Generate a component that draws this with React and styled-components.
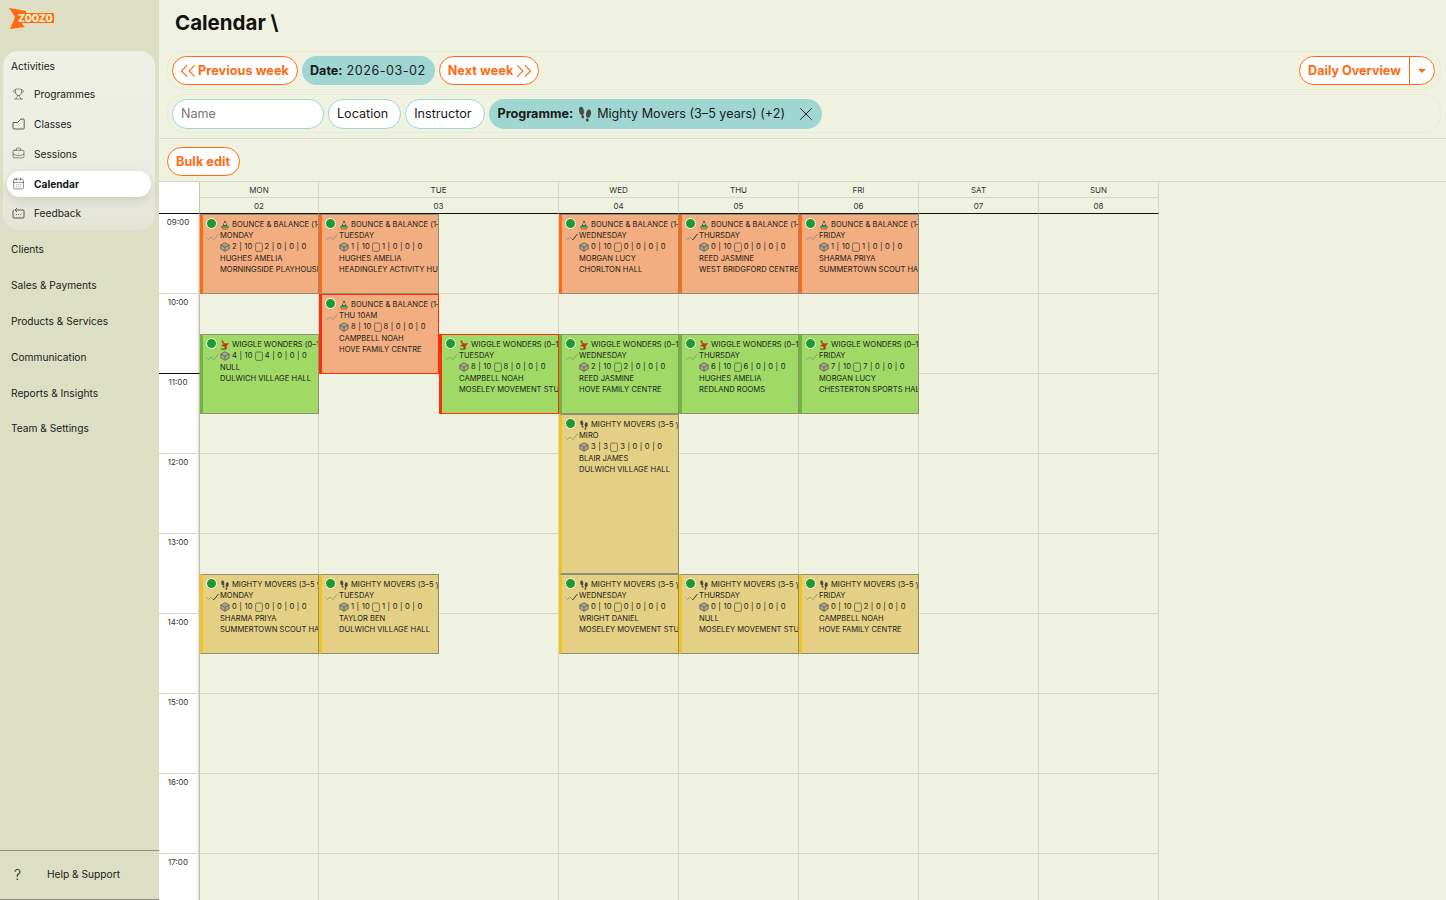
import styled, { createGlobalStyle } from "styled-components";
import { Trophy, BriefcaseBusiness, CalendarDays, ChevronsLeft, ChevronsRight, X } from "lucide-react";

const FONT = `Inter, "Noto Sans", "Liberation Sans", sans-serif`;
const ORANGE = "#ff6a13";
const TEAL = "#9fd6d2";

const GlobalStyle = createGlobalStyle`
  html, body {
    margin: 0;
    height: 100%;
    overflow: hidden;
    background: #f0f2e1;
    font-family: ${FONT};
    color: #1a1a1a;
  }
  * { box-sizing: border-box; }
`;

const days = [
  { name: "MON", num: "02", col: 2, span: 1 },
  { name: "TUE", num: "03", col: 3, span: 2 },
  { name: "WED", num: "04", col: 5, span: 1 },
  { name: "THU", num: "05", col: 6, span: 1 },
  { name: "FRI", num: "06", col: 7, span: 1 },
  { name: "SAT", num: "07", col: 8, span: 1 },
  { name: "SUN", num: "08", col: 9, span: 1 },
];

const hours = ["09:00", "10:00", "11:00", "12:00", "13:00", "14:00", "15:00", "16:00", "17:00"];

const kinds = {
  bounce: { bg: "#f2ae81", bar: "#ff6a13", title: "BOUNCE & BALANCE (1–3 years)" },
  wiggle: { bg: "#a0d966", bar: "#6eb43f", title: "WIGGLE WONDERS (0–1 years)" },
  mighty: { bg: "#e4d084", bar: "#f5c21b", title: "MIGHTY MOVERS (3–5 years)" },
};

// start is half hours after 09:00, size in half hours
const events = [
  { kind: "bounce", col: 2, start: 0, size: 2, day: "MONDAY", a: "2 | 10", b: "2 | 0 | 0 | 0", who: "HUGHES AMELIA", where: "MORNINGSIDE PLAYHOUSE" },
  { kind: "bounce", col: 3, start: 0, size: 2, day: "TUESDAY", a: "1 | 10", b: "1 | 0 | 0 | 0", who: "HUGHES AMELIA", where: "HEADINGLEY ACTIVITY HUB" },
  { kind: "bounce", col: 5, start: 0, size: 2, day: "WEDNESDAY", a: "0 | 10", b: "0 | 0 | 0 | 0", who: "MORGAN LUCY", where: "CHORLTON HALL", done: true },
  { kind: "bounce", col: 6, start: 0, size: 2, day: "THURSDAY", a: "0 | 10", b: "0 | 0 | 0 | 0", who: "REED JASMINE", where: "WEST BRIDGFORD CENTRE", done: true },
  { kind: "bounce", col: 7, start: 0, size: 2, day: "FRIDAY", a: "1 | 10", b: "1 | 0 | 0 | 0", who: "SHARMA PRIYA", where: "SUMMERTOWN SCOUT HALL" },
  { kind: "bounce", col: 3, start: 2, size: 2, day: "THU 10AM", a: "8 | 10", b: "8 | 0 | 0 | 0", who: "CAMPBELL NOAH", where: "HOVE FAMILY CENTRE", alert: true },
  { kind: "wiggle", col: 2, start: 3, size: 2, a: "4 | 10", b: "4 | 0 | 0 | 0", who: "NULL", where: "DULWICH VILLAGE HALL" },
  { kind: "wiggle", col: 4, start: 3, size: 2, day: "TUESDAY", a: "8 | 10", b: "8 | 0 | 0 | 0", who: "CAMPBELL NOAH", where: "MOSELEY MOVEMENT STUDIO", alert: true },
  { kind: "wiggle", col: 5, start: 3, size: 2, day: "WEDNESDAY", a: "2 | 10", b: "2 | 0 | 0 | 0", who: "REED JASMINE", where: "HOVE FAMILY CENTRE" },
  { kind: "wiggle", col: 6, start: 3, size: 2, day: "THURSDAY", a: "6 | 10", b: "6 | 0 | 0 | 0", who: "HUGHES AMELIA", where: "REDLAND ROOMS" },
  { kind: "wiggle", col: 7, start: 3, size: 2, day: "FRIDAY", a: "7 | 10", b: "7 | 0 | 0 | 0", who: "MORGAN LUCY", where: "CHESTERTON SPORTS HALL" },
  { kind: "mighty", col: 5, start: 5, size: 4, day: "MIRO", a: "3 | 3", b: "3 | 0 | 0 | 0", who: "BLAIR JAMES", where: "DULWICH VILLAGE HALL" },
  { kind: "mighty", col: 2, start: 9, size: 2, day: "MONDAY", a: "0 | 10", b: "0 | 0 | 0 | 0", who: "SHARMA PRIYA", where: "SUMMERTOWN SCOUT HALL", done: true },
  { kind: "mighty", col: 3, start: 9, size: 2, day: "TUESDAY", a: "1 | 10", b: "1 | 0 | 0 | 0", who: "TAYLOR BEN", where: "DULWICH VILLAGE HALL" },
  { kind: "mighty", col: 5, start: 9, size: 2, day: "WEDNESDAY", a: "0 | 10", b: "0 | 0 | 0 | 0", who: "WRIGHT DANIEL", where: "MOSELEY MOVEMENT STUDIO", done: true },
  { kind: "mighty", col: 6, start: 9, size: 2, day: "THURSDAY", a: "0 | 10", b: "0 | 0 | 0 | 0", who: "NULL", where: "MOSELEY MOVEMENT STUDIO", done: true },
  { kind: "mighty", col: 7, start: 9, size: 2, day: "FRIDAY", a: "0 | 10", b: "2 | 0 | 0 | 0", who: "CAMPBELL NOAH", where: "HOVE FAMILY CENTRE" },
];

const Logo = () => (
  <svg width="46" height="21" viewBox="0 0 46 21">
    <polygon points="0,0 17,3 17,5 45,5 45,15 13,15 13,16 16,19 1,21 6,9" fill="#ff6a13" />
    <text x="9" y="14" fontFamily={FONT} fontSize="10.5" fontWeight="800" letterSpacing="-0.3" fill="#f6f2d0">
      Z00Z0
    </text>
  </svg>
);

const ClassesIcon = () => (
  <svg width="13" height="12" viewBox="0 0 13 12" fill="none" stroke="#333" strokeWidth="0.8">
    <path d="M1 4.5h4.5L9 1h2.2a1 1 0 0 1 1 1v8a1 1 0 0 1-1 1H2a1 1 0 0 1-1-1z" />
  </svg>
);

const FeedbackIcon = () => (
  <svg width="13" height="12" viewBox="0 0 13 12" fill="none" stroke="#333" strokeWidth="0.8">
    <path d="M4 3H11a1 1 0 0 1 1 1v6a1 1 0 0 1-1 1H2a1 1 0 0 1-1-1V4a1 1 0 0 1 1-1" />
    <path d="M5 1L3 3l2 2" />
    <path d="M4 7.5h.8M6.2 7.5h.8M8.4 7.5h.8" />
  </svg>
);

const BounceIcon = () => (
  <svg width="10" height="10" viewBox="0 0 10 10">
    <path d="M5 0L7.5 6H2.5z" fill="#4d4a3f" />
    <circle cx="5" cy="4" r="1.3" fill="#e7c06d" />
    <rect x="1" y="6" width="8" height="2" fill="#4f9a6c" />
    <rect x="2" y="8" width="6" height="2" fill="#d9863a" />
  </svg>
);

const WiggleIcon = () => (
  <svg width="10" height="10" viewBox="0 0 10 10">
    <path d="M2 1.5L5 3.5L9 3L6.5 6.5L7 9H5L4 6.5L1 6L3 4.5z" fill="#c8321f" />
    <circle cx="2.5" cy="1.5" r="1" fill="#7a4a20" />
    <rect x="1" y="8.5" width="5" height="1.2" fill="#4d6a2a" />
  </svg>
);

const FeetIcon = ({ size = 10 }) => (
  <svg width={size} height={size} viewBox="0 0 10 10" fill="#4a4a44">
    <ellipse cx="2.8" cy="3" rx="1.5" ry="2.6" transform="rotate(-10 2.8 3)" />
    <ellipse cx="3.6" cy="6.7" rx="0.9" ry="1.1" />
    <ellipse cx="7.2" cy="4.8" rx="1.5" ry="2.6" transform="rotate(10 7.2 4.8)" />
    <ellipse cx="6.4" cy="8.7" rx="0.9" ry="1.1" />
  </svg>
);

const kindIcons = { bounce: BounceIcon, wiggle: WiggleIcon, mighty: FeetIcon };

const CubeIcon = () => (
  <svg width="10" height="10" viewBox="0 0 10 10" fill="#a8a48f" stroke="#45453d" strokeWidth="0.6">
    <path d="M5 .7L9.2 3v4L5 9.3.8 7V3z" />
    <path d="M.8 3L5 5.3 9.2 3M5 5.3v4" fill="none" />
  </svg>
);

const SlotIcon = () => (
  <svg width="8" height="10" viewBox="0 0 8 10" fill="none" stroke="#3d3d38" strokeWidth="0.6">
    <rect x=".6" y="1" width="6.8" height="8.4" rx="1.2" />
  </svg>
);

// grey wave of ticks, the last one goes black when the register is done
const DoubleTick = ({ done }) => (
  <svg width="13" height="8" viewBox="0 0 13 8" fill="none" strokeWidth="0.8">
    <path d="M.5 4.5L2.5 6.5 5 4l2 2" stroke="#8d8d80" />
    <path d="M7 6l.8.8L12.5 1" stroke={done ? "#111" : "#8d8d80"} />
  </svg>
);

const Sidebar = () => (
  <Side>
    <LogoWrap>
      <Logo />
    </LogoWrap>
    <Group>
      <GroupTitle>Activities</GroupTitle>
      <SubItem>
        <Trophy size={12} strokeWidth={1} />
        Programmes
      </SubItem>
      <SubItem>
        <ClassesIcon />
        Classes
      </SubItem>
      <SubItem>
        <BriefcaseBusiness size={13} strokeWidth={1} />
        Sessions
      </SubItem>
      <SubItem $active>
        <CalendarDays size={13} strokeWidth={1} />
        Calendar
      </SubItem>
      <SubItem>
        <FeedbackIcon />
        Feedback
      </SubItem>
    </Group>
    <TopItem>Clients</TopItem>
    <TopItem>Sales &amp; Payments</TopItem>
    <TopItem>Products &amp; Services</TopItem>
    <TopItem>Communication</TopItem>
    <TopItem>Reports &amp; Insights</TopItem>
    <TopItem>Team &amp; Settings</TopItem>
    <Help>
      <HelpMark>?</HelpMark>
      Help &amp; Support
    </Help>
  </Side>
);

const Toolbar = () => (
  <>
    <Panel>
      <PrevButton>
        <ChevronsLeft size={26} strokeWidth={1} />
        Previous week
      </PrevButton>
      <FilledChip>
        <b>Date:</b> <DateValue>2026-03-02</DateValue>
      </FilledChip>
      <NextButton>
        Next week
        <ChevronsRight size={26} strokeWidth={1} />
      </NextButton>
      <SplitButton>
        <SplitLabel>Daily Overview</SplitLabel>
        <SplitCaret>
          <Caret />
        </SplitCaret>
      </SplitButton>
    </Panel>
    <Panel>
      <NameInput placeholder="Name" />
      <FilterChip>Location</FilterChip>
      <FilterChip>Instructor</FilterChip>
      <ProgrammeChip>
        <b>Programme:</b>
        <FeetIcon size={16} />
        Mighty Movers (3–5 years) (+2)
        <CloseIcon>
          <X size={22} strokeWidth={1} />
        </CloseIcon>
      </ProgrammeChip>
    </Panel>
  </>
);

const EventCard = ({ ev }) => {
  const kind = kinds[ev.kind];
  const Icon = kindIcons[ev.kind];
  return (
    <Event $col={ev.col} $start={ev.start} $size={ev.size} $bg={kind.bg} $bar={kind.bar} $alert={ev.alert}>
      <EventSide>
        <Dot />
        <Ticks>
          <DoubleTick done={ev.done} />
        </Ticks>
      </EventSide>
      <EventBody>
        <EventLine>
          <Icon />
          <TitleText>{kind.title}</TitleText>
        </EventLine>
        {ev.day && <EventLine>{ev.day}</EventLine>}
        <EventLine>
          <CubeIcon />
          <StatText>{ev.a}</StatText>
          <SlotIcon />
          <StatText>{ev.b}</StatText>
        </EventLine>
        <PersonLine>{ev.who}</PersonLine>
        <EventLine>{ev.where}</EventLine>
      </EventBody>
    </Event>
  );
};

const Calendar = () => (
  <CalendarGrid>
    <CornerCell $row={1} />
    <CornerCell $row={2} $last />
    {days.map((d) => (
      <HeadCell key={d.name} $row={1} $col={d.col} $span={d.span}>
        {d.name}
      </HeadCell>
    ))}
    {days.map((d) => (
      <HeadCell key={d.num} $row={2} $col={d.col} $span={d.span} $last>
        {d.num}
      </HeadCell>
    ))}
    {hours.map((h, i) => (
      <TimeCell key={h} $index={i} $now={h === "10:00"}>
        {h}
      </TimeCell>
    ))}
    {hours.map((h, i) =>
      days.map((d) => <HourCell key={h + d.name} $index={i} $col={d.col} $span={d.span} />)
    )}
    {events.map((ev, i) => (
      <EventCard key={i} ev={ev} />
    ))}
  </CalendarGrid>
);

export default function App() {
  return (
    <>
      <GlobalStyle />
      <Page>
        <Sidebar />
        <Main>
          <PageTitle>Calendar \</PageTitle>
          <Toolbar />
          <BulkRow>
            <BulkButton>Bulk edit</BulkButton>
          </BulkRow>
          <Calendar />
        </Main>
      </Page>
    </>
  );
}

const Page = styled.div`
  display: flex;
  height: 100vh;
  overflow: hidden;
`;

const Side = styled.aside`
  width: 159px;
  flex: none;
  display: flex;
  flex-direction: column;
  background: #dcdfc3;
  font-size: 10.2px;
`;

const LogoWrap = styled.div`
  height: 51px;
  padding: 8px 0 0 9px;
`;

const Group = styled.div`
  margin: 0 4px 1px 3px;
  height: 179px;
  padding: 3.4px 4px 0;
  border-radius: 15px;
  background: linear-gradient(180deg, #eeefe5 0%, #ecede2 70%, #e3e4d5 100%);
`;

const GroupTitle = styled.div`
  height: 23px;
  padding-left: 4px;
  display: flex;
  align-items: center;
`;

const SubItem = styled.div`
  height: 26px;
  margin-top: 3.8px;
  padding-left: 5px;
  display: flex;
  align-items: center;
  gap: 9px;
  border-radius: 13px;
  font-weight: ${(p) => (p.$active ? 700 : 400)};
  background: ${(p) => (p.$active ? "#fff" : "transparent")};
  box-shadow: ${(p) => (p.$active ? "0 4px 10px rgba(90, 90, 70, 0.18)" : "none")};

  svg {
    width: 13px;
    flex: none;
    color: #333;
  }
`;

const TopItem = styled.div`
  height: 35.9px;
  padding-left: 11px;
  display: flex;
  align-items: center;
`;

const Help = styled.div`
  margin-top: auto;
  height: 50px;
  padding-left: 14px;
  padding-bottom: 2px;
  display: flex;
  align-items: center;
  border-top: 1px solid #8f9080;
  border-bottom: 1px solid #8f9080;
`;

const HelpMark = styled.span`
  width: 33px;
  font-size: 14px;
  font-weight: 300;
`;

const Main = styled.main`
  flex: 1;
  min-width: 0;
  display: flex;
  flex-direction: column;

  > * {
    flex: none;
  }
`;

const PageTitle = styled.h1`
  margin: 0;
  height: 51px;
  padding: 9px 0 0 16px;
  font-size: 20.5px;
  line-height: 27px;
  font-weight: 700;
  color: #111;
`;

const Panel = styled.div`
  height: 39px;
  margin: 0 5px 4px 8px;
  padding: 4px;
  display: flex;
  align-items: center;
  gap: 4px;
  border: 1px solid #e9ebd8;
  border-radius: 18px;

  & + & {
    margin-bottom: 6px;
  }
`;

const OutlineButton = styled.button`
  height: 29px;
  padding: 0 8px;
  display: inline-flex;
  align-items: center;
  font-family: ${FONT};
  font-size: 12.6px;
  font-weight: 700;
  letter-spacing: 0.1px;
  color: ${ORANGE};
  background: #fff;
  border: 1px solid ${ORANGE};
  border-radius: 15px;
  white-space: nowrap;
`;

const PrevButton = styled(OutlineButton)`
  svg {
    flex: none;
    margin: 0 -2.5px 0 -6.5px;
  }
`;

const NextButton = styled(OutlineButton)`
  svg {
    flex: none;
    margin: 0 -6.5px 0 -2.5px;
  }
`;

const BulkButton = styled(OutlineButton)`
  padding: 0 9px 0 8px;
`;

const FilledChip = styled.div`
  height: 29px;
  padding: 0 9px 0 8px;
  display: inline-flex;
  align-items: center;
  gap: 4px;
  font-size: 12.6px;
  background: ${TEAL};
  border-radius: 15px;
  white-space: nowrap;
`;

const DateValue = styled.span`
  letter-spacing: 0.5px;
`;

const SplitButton = styled.div`
  margin-left: auto;
  margin-right: 1px;
  height: 29px;
  display: flex;
  border: 1px solid ${ORANGE};
  border-radius: 15px;
  background: #fff;
  overflow: hidden;
`;

const SplitLabel = styled.div`
  width: 109px;
  display: flex;
  align-items: center;
  justify-content: center;
  font-size: 12.6px;
  font-weight: 700;
  color: ${ORANGE};
  white-space: nowrap;
`;

const SplitCaret = styled.div`
  width: 25px;
  display: flex;
  align-items: center;
  justify-content: center;
  border-left: 1px solid ${ORANGE};
`;

const Caret = styled.span`
  width: 0;
  height: 0;
  border-left: 4px solid transparent;
  border-right: 4px solid transparent;
  border-top: 4px solid ${ORANGE};
`;

const NameInput = styled.input`
  width: 152px;
  height: 30px;
  padding: 0 8px;
  font-family: ${FONT};
  font-size: 12.6px;
  background: #fff;
  border: 1px solid ${TEAL};
  border-radius: 15px;
  outline: none;

  &::placeholder {
    color: #777;
  }
`;

const FilterChip = styled.div`
  height: 30px;
  padding: 0 12px 0 8px;
  display: inline-flex;
  align-items: center;
  font-size: 12.6px;
  background: #fff;
  border: 1px solid ${TEAL};
  border-radius: 15px;
`;

const ProgrammeChip = styled(FilledChip)`
  height: 30px;
  padding: 0 5px 0 9px;
  gap: 4px;

  svg {
    flex: none;
  }
`;

const CloseIcon = styled.span`
  display: flex;
  margin-left: 6px;
`;

const BulkRow = styled.div`
  height: 44px;
  padding: 8px 0 0 8px;
  border-top: 1px solid #d9dbc6;
  border-bottom: 1px solid #d5d7c2;
  margin-top: -1px;
`;

const CalendarGrid = styled.div`
  display: grid;
  width: 1000px;
  grid-template-columns: 41px 119px repeat(7, 120px);
  grid-template-rows: 16px 16px repeat(18, 40px);
  font-size: 8px;
`;

const CornerCell = styled.div`
  grid-column: 1;
  grid-row: ${(p) => p.$row};
  background: #fff;
  border-right: 1px solid #c6c7b5;
  border-bottom: ${(p) => (p.$last ? "1px solid #111" : "none")};
`;

const HeadCell = styled.div`
  grid-row: ${(p) => p.$row};
  grid-column: ${(p) => p.$col} / span ${(p) => p.$span};
  display: flex;
  align-items: center;
  justify-content: center;
  border-right: 1px solid #d5d7c2;
  border-bottom: 1px solid ${(p) => (p.$last ? "#111" : "#d5d7c2")};
  color: #333;
`;

const TimeCell = styled.div`
  grid-column: 1;
  grid-row: ${(p) => 3 + p.$index * 2} / span 2;
  padding: 3px 2px 0 0;
  text-align: center;
  background: #fff;
  color: #333;
  border-right: 1px solid #c0c1b0;
  border-bottom: 1px solid ${(p) => (p.$now ? "#111" : "#d5d7c2")};
  box-shadow: inset -2px 0 2px -1px #d9dac9;
`;

const HourCell = styled.div`
  grid-column: ${(p) => p.$col} / span ${(p) => p.$span};
  grid-row: ${(p) => 3 + p.$index * 2} / span 2;
  border-right: 1px solid #d5d7c2;
  border-bottom: 1px solid #d5d7c2;
`;

const Event = styled.div`
  grid-column: ${(p) => p.$col};
  grid-row: ${(p) => 3 + p.$start} / span ${(p) => p.$size};
  z-index: 1;
  min-width: 0;
  display: flex;
  overflow: hidden;
  padding-top: 4px;
  font-size: 7.6px;
  background: ${(p) => p.$bg};
  border: 1px solid ${(p) => (p.$alert ? "#ff2d0a" : "#8f8f78")};
  border-left: 3px solid ${(p) => (p.$alert ? "#ff2d0a" : p.$bar)};
  color: #1d1d16;
`;

const EventSide = styled.div`
  width: 17px;
  flex: none;
  margin-top: -1px;
  padding: 0 0 0 3px;
`;

const Dot = styled.div`
  width: 11px;
  height: 11px;
  border-radius: 50%;
  background: #1f9a2d;
  border: 1px solid #fff;
`;

const Ticks = styled.div`
  display: flex;
  margin-top: 4px;
`;

const EventBody = styled.div`
  flex: 1;
  min-width: 0;
  white-space: nowrap;
`;

const EventLine = styled.div`
  height: 11px;
  line-height: 11px;
  display: flex;
  align-items: center;
  gap: 1px;

  svg {
    flex: none;
  }
`;

const PersonLine = styled(EventLine)`
  margin-top: 1px;
`;

const TitleText = styled.span`
  margin-left: 1px;
`;

const StatText = styled.span`
  margin: 0 1px;
  letter-spacing: 0.2px;
`;
